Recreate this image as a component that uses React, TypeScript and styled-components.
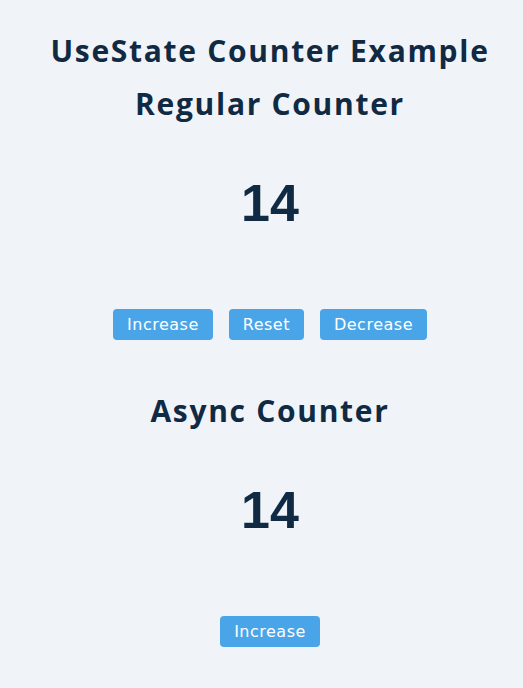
import React, { useState } from "react";
import styled, { createGlobalStyle } from "styled-components";

const Global = createGlobalStyle`
  html, body { margin: 0; padding: 0; background: #f0f4f8; }
  body { font-family: "Open Sans", "Noto Sans", sans-serif; color: #102a43; }
`;

const Page = styled.div`
  display: flex;
  flex-direction: column;
  align-items: center;
  padding: 0 0 0 17px;
  box-sizing: border-box;
  width: 100%;
`;

const Title = styled.h1`
  margin: 28px 0 0;
  font-size: 30px;
  line-height: 46px;
  font-weight: 700;
  letter-spacing: 1.7px;
  color: #102a43;
`;

const SubTitle = styled.h2<{ $top: number }>`
  margin: ${(p) => p.$top}px 0 0;
  font-size: 30px;
  line-height: 46px;
  font-weight: 700;
  letter-spacing: 1.7px;
  color: #102a43;
`;

const Count = styled.div`
  margin-top: 48px;
  font-family: "Liberation Sans", Arial, sans-serif;
  font-size: 52px;
  line-height: 56px;
  font-weight: 700;
  color: #102a43;
`;

const ButtonRow = styled.div`
  display: flex;
  gap: 16px;
  margin-top: 78px;
`;

const Button = styled.button`
  height: 31px;
  padding: 0 14px;
  border: none;
  border-radius: 4px;
  background: #4aa5e8;
  color: #ffffff;
  font-family: "DejaVu Sans", sans-serif;
  font-size: 16px;
  letter-spacing: 0.5px;
  cursor: pointer;
`;

export default function App() {
  const [count, setCount] = useState(14);
  const [asyncCount, setAsyncCount] = useState(14);
  return (
    <Page>
      <Global />
      <Title>UseState Counter Example</Title>
      <SubTitle $top={7}>Regular Counter</SubTitle>
      <Count>{count}</Count>
      <ButtonRow>
        <Button onClick={() => setCount((c) => c + 1)}>Increase</Button>
        <Button onClick={() => setCount(0)}>Reset</Button>
        <Button onClick={() => setCount((c) => c - 1)}>Decrease</Button>
      </ButtonRow>
      <SubTitle $top={48}>Async Counter</SubTitle>
      <Count>{asyncCount}</Count>
      <ButtonRow>
        <Button onClick={() => setTimeout(() => setAsyncCount((c) => c + 1), 1000)}>Increase</Button>
      </ButtonRow>
    </Page>
  );
}
